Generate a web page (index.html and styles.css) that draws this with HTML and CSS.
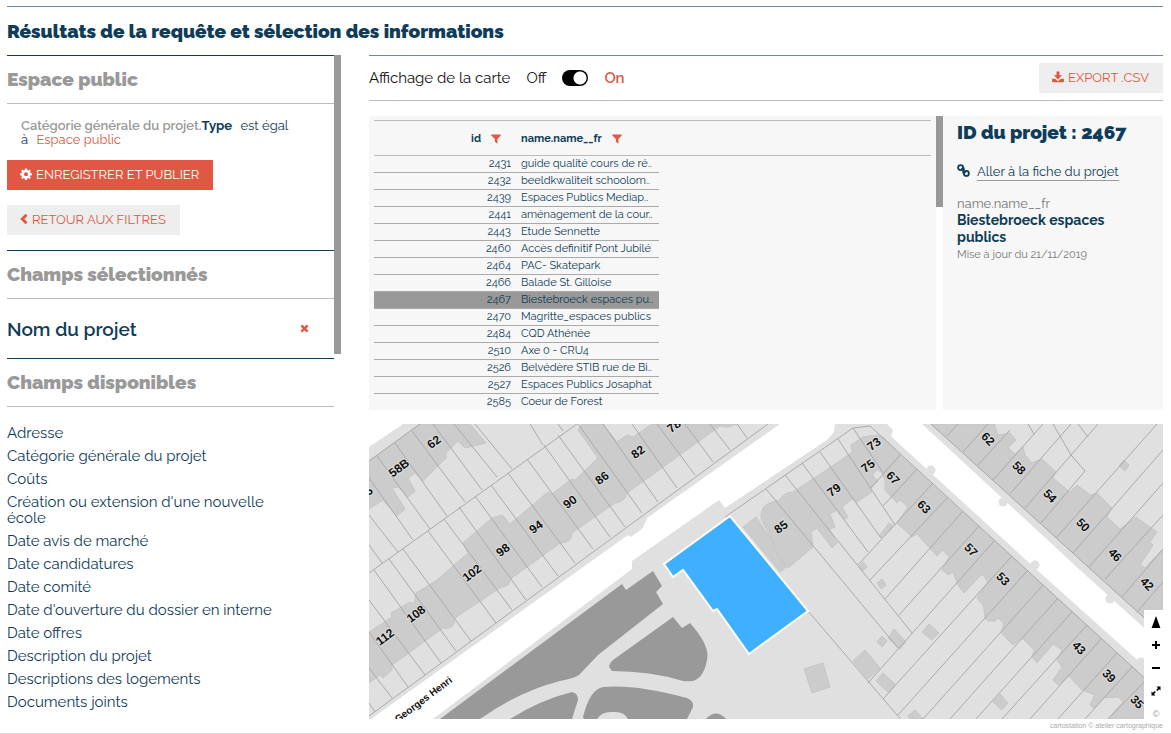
FILE: index.html
```
<!DOCTYPE html>
<html lang="fr">
<head>
<meta charset="utf-8">
<meta name="viewport" content="width=device-width, initial-scale=1">
<title>Résultats de la requête</title>
<link rel="stylesheet" href="styles.css">
</head>
<body>
<div class="page">
  <h1 class="page-title">Résultats de la requête et sélection des informations</h1>
  <div class="columns">
    <aside class="sidebar">
      <div class="sidebar-body">
        <section class="block">
          <h2 class="block-title">Espace public</h2>
          <p class="filter"><b class="filter-group">Catégorie générale du projet.</b><b class="filter-field">Type</b> est égal à <span class="filter-value">Espace public</span></p>
          <div class="actions">
            <button type="button" class="btn btn-primary"><svg class="icon" viewBox="0 0 12 12" aria-hidden="true"><path fill-rule="evenodd" d="M5 .6h2l.3 1.5 1 .4L9.6 1.600 10.900 3l-.9 1.200.4.900 1.500.3v1.800l-1.500.3-.4 1 .9 1.200-1.300 1.300-1.300-.9-1 .4L7 11.900H5l-.3-1.500-1-.4-1.300.9-1.300-1.300.9-1.200-.4-1L.1 7.200V5.400l1.500-.3.4-.9-.9-1.200 1.300-1.400 1.300.9 1-.4zM6 4.200a2 2 0 1 0 0 4 2 2 0 0 0 0-4z"/></svg>ENREGISTRER ET PUBLIER</button>
            <button type="button" class="btn"><svg class="icon icon-narrow" viewBox="0 0 8 12" aria-hidden="true"><path d="M5.500.8 7.500 2.800 4.300 6l3.200 3.200-2 2L.3 6z"/></svg>RETOUR AUX FILTRES</button>
          </div>
        </section>
        <section class="block">
          <h2 class="block-title">Champs sélectionnés</h2>
          <div class="selected"><span>Nom du projet</span><button type="button" class="icon-btn" aria-label="Retirer Nom du projet"><svg class="cross" viewBox="0 0 9 9" aria-hidden="true"><path d="M2.300.5 4.500 2.700 6.700.5 8.500 2.300 6.300 4.500 8.500 6.700 6.700 8.500 4.500 6.300 2.300 8.500.5 6.700 2.700 4.500.5 2.300z"/></svg></button></div>
        </section>
        <section class="block">
          <h2 class="block-title">Champs disponibles</h2>
          <ul class="fields">
            <li><button type="button">Adresse</button></li>
            <li><button type="button">Catégorie générale du projet</button></li>
            <li><button type="button">Coûts</button></li>
            <li><button type="button">Création ou extension d'une nouvelle école</button></li>
            <li><button type="button">Date avis de marché</button></li>
            <li><button type="button">Date candidatures</button></li>
            <li><button type="button">Date comité</button></li>
            <li><button type="button">Date d'ouverture du dossier en interne</button></li>
            <li><button type="button">Date offres</button></li>
            <li><button type="button">Description du projet</button></li>
            <li><button type="button">Descriptions des logements</button></li>
            <li><button type="button">Documents joints</button></li>
          </ul>
        </section>
      </div>
      <div class="thumb"></div>
    </aside>
    <main class="content">
      <div class="toolbar">
        <span class="toolbar-label" id="carte">Affichage de la carte</span>
        <label class="switch"><span>Off</span><input type="checkbox" role="switch" checked aria-labelledby="carte"><b class="switch-on">On</b></label>
        <button type="button" class="btn btn-export"><svg class="icon" viewBox="0 0 12 12" aria-hidden="true"><path d="M4.500.4h3v3.900h2.600L6 8.400 1.900 4.300h2.600zM.1 7.700h3L6 10.300l2.900-2.600h3v3.600H.1z"/></svg>EXPORT .CSV</button>
      </div>
      <div class="data">
        <div class="table-wrap">
          <table class="results">
            <colgroup><col class="col-id"><col class="col-name"><col></colgroup>
            <thead><tr>
              <th scope="col" class="th-id">id<button type="button" class="icon-btn" aria-label="Filtrer id"><svg class="funnel" viewBox="0 0 10 10" aria-hidden="true"><path d="M.3.5h9.400v1L6.400 5v4.700L3.900 7.800V5L.3 1.500z"/></svg></button></th>
              <th scope="col" class="th-name">name.name__fr<button type="button" class="icon-btn" aria-label="Filtrer name.name__fr"><svg class="funnel" viewBox="0 0 10 10" aria-hidden="true"><path d="M.3.5h9.400v1L6.400 5v4.700L3.900 7.800V5L.3 1.500z"/></svg></button></th>
              <td></td>
            </tr></thead>
            <tbody>
              <tr><td>2431</td><td>guide qualité cours de ré..</td></tr>
              <tr><td>2432</td><td>beeldkwaliteit schoolom..</td></tr>
              <tr><td>2439</td><td>Espaces Publics Mediap..</td></tr>
              <tr><td>2441</td><td>aménagement de la cour..</td></tr>
              <tr><td>2443</td><td>Etude Sennette</td></tr>
              <tr><td>2460</td><td>Accès definitif Pont Jubilé</td></tr>
              <tr><td>2464</td><td>PAC- Skatepark</td></tr>
              <tr><td>2466</td><td>Balade St. Gilloise</td></tr>
              <tr class="active"><td>2467</td><td>Biestebroeck espaces pu..</td></tr>
              <tr><td>2470</td><td>Magritte_espaces publics</td></tr>
              <tr><td>2484</td><td>CQD Athénée</td></tr>
              <tr><td>2510</td><td>Axe 0 - CRU4</td></tr>
              <tr><td>2526</td><td>Belvédère STIB rue de Bi..</td></tr>
              <tr><td>2527</td><td>Espaces Publics Josaphat</td></tr>
              <tr><td>2585</td><td>Coeur de Forest</td></tr>
            </tbody>
          </table>
        </div>
        <div class="thumb thumb-table"></div>
        <article class="detail">
          <h2 class="detail-title">ID du projet : 2467</h2>
          <a href="#fiche" class="detail-link"><svg class="icon link-icon" viewBox="0 0 13 13" aria-hidden="true"><g fill="none" stroke="currentColor" stroke-width="1.800"><circle cx="3.600" cy="3.600" r="2.500"/><circle cx="9.400" cy="9.400" r="2.500"/><path d="M4.300 4.300 8.700 8.700M6.200 3.200l1 2.600M6.800 9.800l-1-2.600"/></g></svg><span>Aller à la fiche du projet</span></a>
          <p class="detail-key">name.name__fr</p>
          <p class="detail-value">Biestebroeck espaces publics</p>
          <p class="detail-date">Mise à jour du 21/11/2019</p>
        </article>
      </div>
      <div class="map">
        <svg class="map-svg" viewBox="369 424 794 295" preserveAspectRatio="xMinYMin slice" role="img" aria-label="Carte des parcelles">
          <rect class="ground" x="369" y="424" width="794" height="295"/>
          <g class="road">
            <path d="M369 424H403L369 447z"/>
            <path d="M371 719 565 580 628 535 631 537 643 528 647 518 780 424H835L834 432 827 440 725 508 719 500 632 561V569L433 719z"/>
            <path d="M887 424H922L1080 570 1163 645V683L1037 570 895 440 891 436 893 430z"/>
          </g>
          <g class="ground">
            <circle cx="931" cy="470" r="4.500"/><circle cx="1003" cy="502" r="4.500"/><circle cx="1035" cy="565" r="4.500"/><circle cx="1110" cy="599" r="4.500"/><circle cx="1141" cy="662" r="4.500"/>
          </g>
          <g class="building">
            <path d="M369 461 420 424H470L486 443 465 448 458 441 446 453V458L423 481 415 473 408 478 415 491 408 497 398 487 392 488 405 509 397 516 383 500 369 509z"/>
            <path d="M369 632 392 617 391 613 410 602 414 604 416 593 437 580 468 553 463 543 492 518 502 515 510 524 548 492 552 494 572 479 575 480 598 458 578 430 582 424H603L617 442 627 435 633 437 652 424H738L727 427 720 426 627 493Q625 502 615 503L572 533Q572 543 560 543L512 578 508 585 500 588 455 618Q455 630 443 628L392 665V670L383 678 380 675 369 683z"/>
            <path d="M761 515Q762 505 770 503 777 500 780 500 783 493 793 492L837 463 852 452 851 445 863 437Q876 434 883 437L900 455 883 473 877 470 872 475 878 481 870 488 872 492 857 502 852 499 842 507 848 517 845 519 837 510 830 514 835 527 829 529 837 543 832 548 817 528 811 532 813 547 788 568 773 548 775 545 761 519z"/>
            <path d="M743 527 756 517 775 545 773 548 786 567 780 572z"/>
            <path d="M900 455 1163 695V719H1108L1123 702 1118 697 1103 698 1094 708 1090 705 1095 695 1082 690 1069 676 1058 685 1053 680 1062 667 1057 660 1062 650 1053 644 1037 663 1032 657 1034 650 1022 638 1013 645 1001 633 1004 623 998 618 995 621Q989 622 985 619 984 607 983 605L977 598 988 582 982 574 964 593 958 585 953 572 948 575 942 570 949 557 943 550 937 556 917 534 912 537 897 523 908 507 900 500 897 503 885 490 885 480 882 474z"/>
            <path d="M931 424H995V427L998 435 1010 433 1016 440 1008 448 1015 454 1023 447 1025 455 1032 463 1042 459 1056 472 1053 478 1070 492 1077 485 1090 495 1097 493 1112 508 1107 517 1120 529 1136 517 1157 532 1150 542 1153 545 1140 565 1145 568 1163 549V635z"/>
            <path d="M804 669 823 663 830 687 812 693zM853 661 865 650 880 668 868 679zM877 583 882 579 886 585 881 589zM877 642 882 636 887 641 882 647zM876 681 883 673 895 684 889 693zM888 638 894 629 906 642 900 649zM922 632 929 624 939 633 932 640zM993 702 1000 694 1008 703 1002 710zM908 716 915 710 923 719H910zM880 535 889 523 893 526 881 538zM859 567 863 562 867 567 862 571zM1119 466 1124 460 1129 465 1125 471z"/>
          </g>
          <g class="parcel">
            <path d="M369 573 577 424M369 461 420 424M369 716 768 424M377 456 430 529M395 443 447 516M412 431 465 502M433 424 482 490M454 424 497 477M475 424 512 469M369 478 413 540M369 515 398 552M369 545 382 563M530 424 543 445M558 424 563 431"/>
            <path d="M508 473 575 563M527 459 593 549M544 445 610 537M558 435 625 527M578 424 642 513M603 424 658 502M491 485 558 576M475 496 542 587M459 507 526 600M444 519 512 610M428 531 496 623M403 549 471 641M389 559 456 651M374 570 441 663M369 600 425 675M369 632 408 687M369 668 392 698M369 703 375 712M632 424 677 488M657 424 695 475M685 424 713 462M710 424 730 450M737 424 747 438"/>
            <path d="M725 517 853 428 870 426 1163 695M766 489 898 648M785 475 912 633M802 463 868 552M820 452 881 538M838 439 895 525M853 428 883 473M871 488 900 455M808 611 903 722"/>
            <path d="M917 469 883 506M933 483 858 565M948 497 870 580M963 511 885 599M979 526 899 615M995 540 868 683M1012 556 883 699M1028 570 898 715M1043 585 923 719M1058 598 950 719M1072 612 976 719M1087 625 1002 719M1102 638 1030 719M1117 653 1058 719M1132 667 1085 719M1146 680 1108 719"/>
            <path d="M931 424 1163 635M947 436 958 424M963 452 988 424M978 465 1010 430M993 480 1043 424M1010 494 1071 424M1025 508 1098 424M1041 523 1085 471 1071 455 1053 424M1028 424 1034 434M1078 424 1088 437M1057 537 1157 424M1073 553 1163 450M1089 567 1163 483M1105 579 1163 515M1122 597 1163 549M1137 612 1163 582"/>
          </g>
          <g class="park">
            <path d="M440 719 622 584 626 590 653 571 662 586 656 592 663 604 598 655 579 675Q575 678 560 681 520 691 480 719z"/>
            <path d="M613 660 673 617 682 628 690 623Q707 642 707.500 655 707 666 702 674 697 683 683 681 650 671 612 671 606 666 613 660z"/>
            <path d="M510 719Q540 700 572 692 578 693 578 700L572 719z"/>
            <path fill-rule="evenodd" d="M583 717Q590 689 603 687 635 684 687 698 694 701 693 707L687 719H628Q624 711 613 712 602 711 597 719H584z"/>
            <path d="M706 719Q716 708 726 719z"/>
          </g>
          <path class="project" d="M730 516 808 611 749 654 717 609 713 611 683 570 673 577 664 564z"/>
          <g class="number">
            <text transform="translate(434 442) rotate(-37)" y="4">62</text>
            <text transform="translate(399 468) rotate(-37)" y="4">58B</text>
            <text transform="translate(366 493) rotate(-37)" y="4">56</text>
            <text transform="translate(674 426) rotate(-37)" y="4">78</text>
            <text transform="translate(638 452) rotate(-37)" y="4">82</text>
            <text transform="translate(602 478) rotate(-37)" y="4">86</text>
            <text transform="translate(570 502) rotate(-37)" y="4">90</text>
            <text transform="translate(536 527) rotate(-37)" y="4">94</text>
            <text transform="translate(503 550) rotate(-37)" y="4">98</text>
            <text transform="translate(472 573) rotate(-37)" y="4">102</text>
            <text transform="translate(416 614) rotate(-37)" y="4">108</text>
            <text transform="translate(385 637) rotate(-37)" y="4">112</text>
            <text transform="translate(781 527) rotate(-37)" y="4">85</text>
            <text transform="translate(834 490) rotate(-37)" y="4">79</text>
            <text transform="translate(868 466) rotate(-37)" y="4">75</text>
            <text transform="translate(874 444) rotate(-37)" y="4">73</text>
            <text transform="translate(893 478) rotate(46)" y="4">67</text>
            <text transform="translate(924 507) rotate(46)" y="4">63</text>
            <text transform="translate(971 550) rotate(46)" y="4">57</text>
            <text transform="translate(1003 579) rotate(46)" y="4">53</text>
            <text transform="translate(1079 648) rotate(46)" y="4">43</text>
            <text transform="translate(1109 676) rotate(46)" y="4">39</text>
            <text transform="translate(1137 702) rotate(46)" y="4">35</text>
            <text transform="translate(988 439) rotate(46)" y="4">62</text>
            <text transform="translate(1019 468) rotate(46)" y="4">58</text>
            <text transform="translate(1050 496) rotate(46)" y="4">54</text>
            <text transform="translate(1083 525) rotate(46)" y="4">50</text>
            <text transform="translate(1115 555) rotate(46)" y="4">46</text>
            <text transform="translate(1147 584) rotate(46)" y="4">42</text>
            <text class="street" transform="translate(423 699) rotate(-37)" y="4">Georges Henri</text>
          </g>
        </svg>
        <div class="map-tools">
          <button type="button" aria-label="Nord"><svg viewBox="0 0 12 12" aria-hidden="true"><path d="M6 0 10.400 12H1.600z"/></svg></button>
          <button type="button" aria-label="Zoomer"><svg viewBox="0 0 12 12" aria-hidden="true"><path d="M5 2h2v3h3v2H7v3H5V7H2V5h3z"/></svg></button>
          <button type="button" aria-label="Dézoomer"><svg viewBox="0 0 12 12" aria-hidden="true"><path d="M2 5h8v2H2z"/></svg></button>
          <button type="button" aria-label="Plein écran"><svg viewBox="0 0 12 12" aria-hidden="true"><path d="M6.500 1.500h4v4L9.200 4.200 7.300 6.100 6.200 5 8 3zM5.500 10.500h-4v-4l1.300 1.300 1.900-1.900L5.800 7 4 9z"/></svg></button>
          <span class="copy">©</span>
        </div>
      </div>
      <p class="credit">cartostation © atelier cartographique</p>
    </main>
  </div>
</div>
</body>
</html>
```
FILE: styles.css
```
* { box-sizing: border-box; }
body {
  margin: 0;
  background: #fff;
  color: #0f3c58;
  font-family: Raleway, Lato, "Open Sans", sans-serif;
  font-size: 15px;
}
h1, h2, p, ul { margin: 0; padding: 0; }
button { font: inherit; color: inherit; background: none; border: 0; padding: 0; cursor: pointer; }
.page {
  display: flex;
  flex-direction: column;
  height: 100vh;
  padding: 6px 8px 0 7px;
  border-bottom: 1px solid #ddd;
}
.page-title {
  flex: none;
  border-top: 1px solid #6d8ba0;
  height: 49px;
  line-height: 48px;
  font-size: 19px;
  font-weight: 900;
}
.columns { flex: 1; min-height: 0; display: grid; grid-template-columns: 334px minmax(0, 1fr); gap: 28px; }
.sidebar { display: flex; min-height: 0; overflow: hidden; }
.sidebar-body { flex: 1; min-width: 0; }
.thumb { flex: none; width: 7px; height: 299px; background: #999; }
.block { border-top: 1px solid #0f3c58; }
.block-title {
  height: 48px;
  line-height: 46px;
  border-bottom: 1px solid #bbb;
  font-size: 19px;
  font-weight: 900;
  color: #999;
}
.filter { padding: 15px 36px 13px 14px; font-size: 13px; line-height: 14px; }
.filter-group { font-weight: 600; color: #999; }
.filter-field { margin-right: 5px; }
.filter-value { margin-left: 5px; color: #e05843; }
.actions { display: flex; flex-direction: column; align-items: flex-start; gap: 15px; padding-bottom: 15px; }
.btn {
  display: flex;
  align-items: center;
  gap: 4px;
  height: 30px;
  padding: 0 14px 2px 13px;
  background: #eee;
  color: #e05843;
  font-size: 13px;
}
.btn-primary { background: #e05843; color: #fff; }
.icon { width: 12px; height: 12px; fill: currentColor; }
.icon-narrow { width: 8px; }
.selected {
  display: flex;
  align-items: center;
  justify-content: space-between;
  height: 59px;
  padding-right: 25px;
  font-size: 19px;
  font-weight: 600;
}
.icon-btn { display: inline-flex; color: #e05843; }
.cross { width: 9px; height: 9px; fill: currentColor; }
.fields { display: flex; flex-direction: column; gap: 7px; padding: 18px 50px 0 0; list-style: none; line-height: 16px; }
.fields li { display: flex; }
.fields button { text-align: left; }

.content { display: flex; flex-direction: column; min-width: 0; min-height: 0; }
.toolbar {
  flex: none;
  display: flex;
  align-items: center;
  gap: 16px;
  height: 46px;
  border-top: 1px solid #6d8ba0;
  border-bottom: 1px solid #bbb;
  color: #111;
}
.switch { display: flex; align-items: center; gap: 16px; }
.switch-on { font-weight: 600; color: #e05843; }
.switch input {
  appearance: none;
  width: 26px;
  height: 16px;
  margin: 0;
  border-radius: 8px;
  background: radial-gradient(circle at 18px 8px, #fff 6px, #000 7px);
}
.btn-export { margin-left: auto; }
.data { flex: none; display: flex; height: 294px; margin-top: 15px; }
.table-wrap { flex: 1; min-width: 0; overflow: hidden; padding: 4px 5px 0; background: #f7f7f7; }
.results { width: 100%; table-layout: fixed; border-collapse: collapse; font-size: 11px; }
.col-id { width: 142px; }
.col-name { width: 143px; }
.results thead tr { height: 35px; border-top: 1px solid #bbb; border-bottom: 1px solid #bbb; }
.results th { padding: 0; white-space: nowrap; }
.results .th-id { padding-right: 15px; text-align: right; }
.results .th-name { padding-left: 5px; text-align: left; }
.results th .icon-btn { margin-left: 10px; vertical-align: middle; }
.funnel { width: 10px; height: 10px; fill: currentColor; }
.results tbody td {
  height: 17px;
  padding: 0 5px;
  border-bottom: 1px solid #aaa;
  line-height: 14px;
  white-space: nowrap;
  overflow: hidden;
}
.results tbody td:first-child { text-align: right; }
.results .active td { background: #999; }
.thumb-table { height: 91px; }
.detail { flex: none; width: 220px; padding: 6px 14px; background: #f7f7f7; }
.detail-title { font-size: 19px; line-height: 20px; font-weight: 900; }
.detail-link { display: flex; gap: 7px; margin: 22px 0 15px; font-size: 13px; line-height: 16px; color: inherit; text-decoration: none; }
.detail-link span { border-bottom: 1px solid #999; }
.link-icon { width: 13px; height: 13px; }
.detail-key { font-size: 13px; line-height: 16px; color: #777; }
.detail-value { font-size: 14px; line-height: 17px; font-weight: 700; }
.detail-date { font-size: 11px; line-height: 18px; color: #777; }
.filter { padding-right: 42px; }

.map { position: relative; flex: 1; min-height: 0; margin-top: 14px; overflow: hidden; }
.map-svg { display: block; width: 100%; height: 100%; }
.ground { fill: #e0e0e0; }
.road { fill: #fff; }
.building { fill: #ccc; stroke: #c6c6c6; stroke-width: 1; }
.parcel { fill: none; stroke: #aaa; stroke-width: 1; }
.park { fill: #999; }
.project { fill: #3fb0ff; stroke: #fff; stroke-width: 2; }
.number { font-family: "Liberation Sans", sans-serif; font-size: 12px; font-weight: 700; fill: #111; text-anchor: middle; stroke: #ddd; stroke-width: 2; paint-order: stroke; }
.street { font-size: 10px; stroke: #fff; }
.map-tools {
  position: absolute;
  right: 0;
  bottom: 0;
  display: flex;
  flex-direction: column;
  align-items: flex-end;
  width: 19px;
  height: 109px;
  padding: 6px 1px 0 0;
  gap: 11px;
  background: #fff;
}
.map-tools button, .map-tools svg { display: block; width: 12px; height: 12px; }
.copy { width: 12px; color: #999; font-family: "Liberation Sans", sans-serif; font-size: 9px; line-height: 12px; text-align: center; }
.credit { flex: none; height: 14px; font-family: "Liberation Sans", sans-serif; font-size: 7px; line-height: 13px; color: #aaa; text-align: right; }
```
